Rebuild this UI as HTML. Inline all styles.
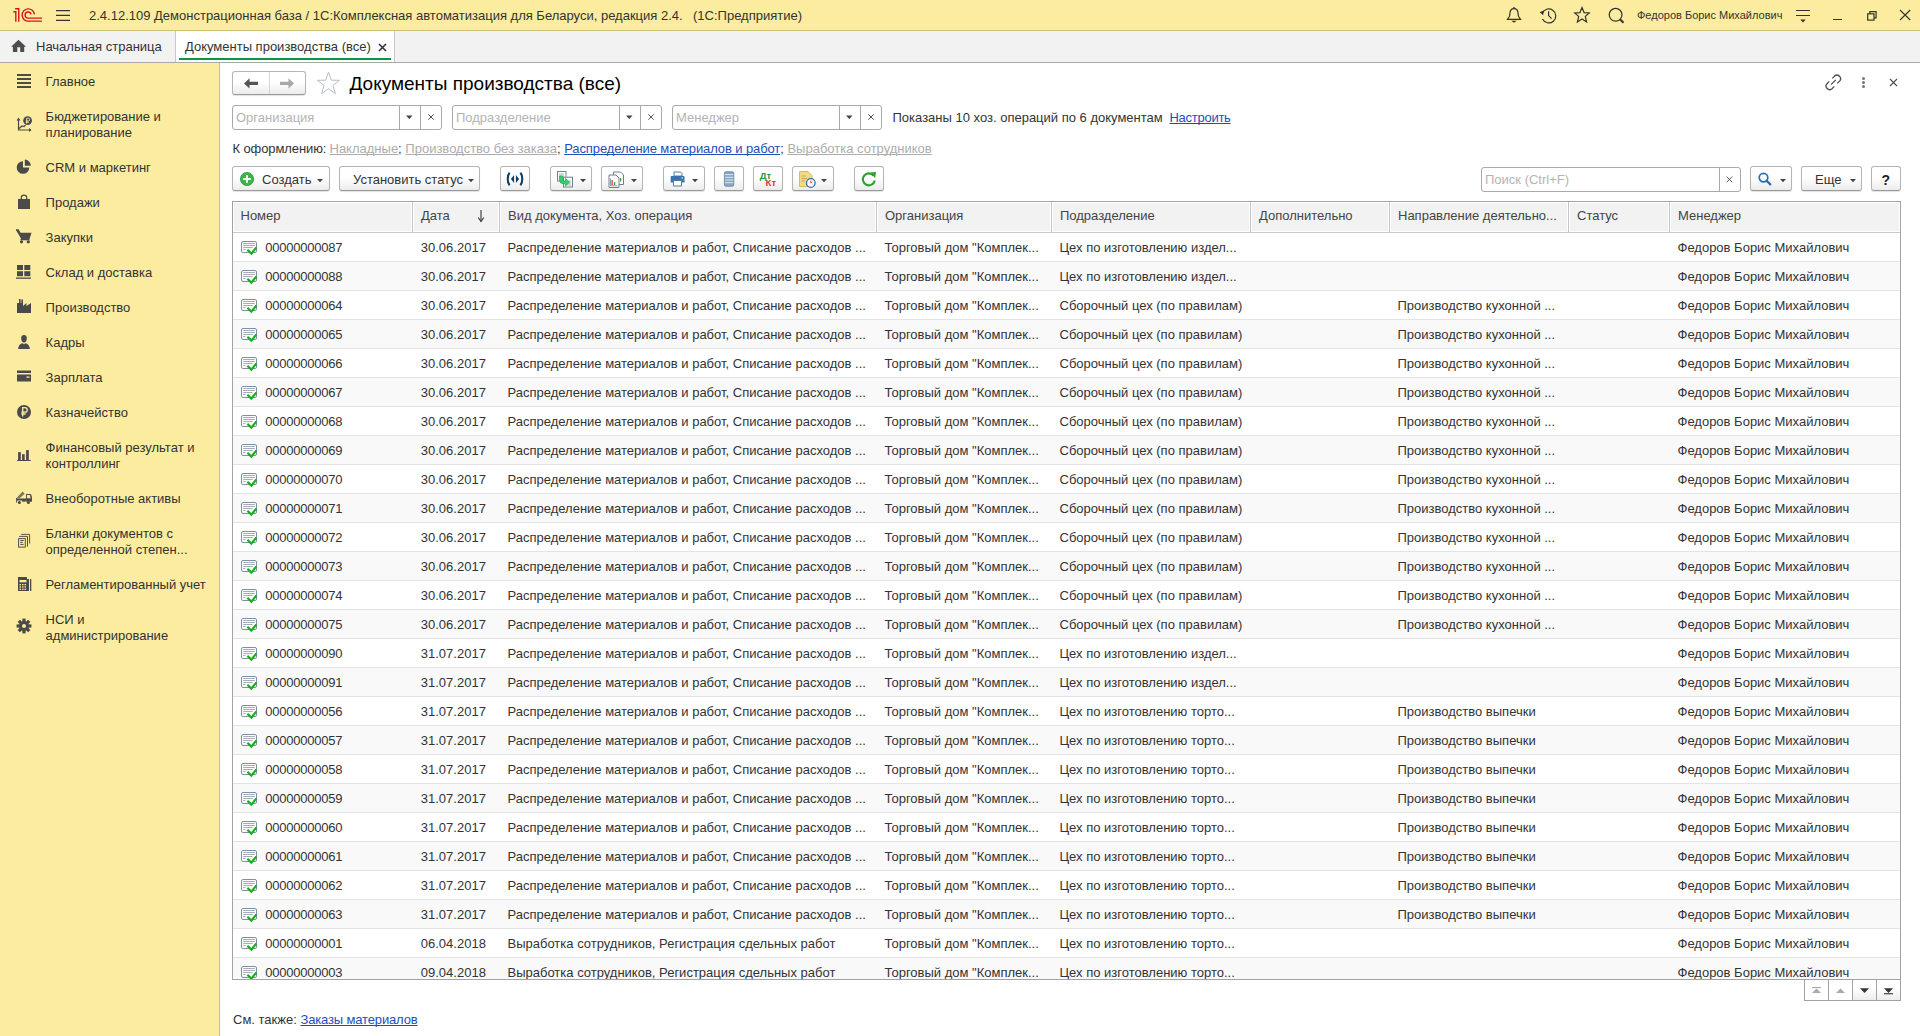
<!DOCTYPE html><html><head><meta charset="utf-8"><style>
html,body{margin:0;padding:0;width:1920px;height:1036px;overflow:hidden;background:#fff;font-family:"Liberation Sans", sans-serif;}
.t{position:absolute;white-space:pre;}
.btn{position:absolute;box-sizing:border-box;border:1px solid #b5b5b5;border-bottom-color:#9a9a9a;border-radius:3px;background:linear-gradient(#fff 0%,#fff 45%,#ececec 100%);box-shadow:0 1px 1px rgba(0,0,0,.12);}
.fld{position:absolute;box-sizing:border-box;border:1px solid #a9a9a9;border-radius:3px;background:#fff;}
.u{text-decoration:underline;}
*{text-decoration-skip-ink:none;}
</style></head><body>

<div style="position:absolute;left:0px;top:0px;width:1920px;height:30px;background:#fbec9f"></div>
<div style="position:absolute;left:0px;top:30px;width:1920px;height:1px;background:#cdbf78"></div>
<svg style="position:absolute;left:8px;top:4px" width="40" height="22" viewBox="0 0 40 22"><g fill="none" stroke="#d8131c" stroke-width="1.38"><path d="M7.8,17.7 V7.8 H5.3 M7.1,4.8 H10.8 V17.7"/><path d="M26.4,10.3 A6.15,6.15 0 1 0 20.3,17.15 H34"/><path d="M23.1,10.4 A3.05,3.05 0 1 0 20.1,14.1 H34"/></g></svg>
<svg style="position:absolute;left:56px;top:8px" width="15" height="14" viewBox="0 0 15 14"><g stroke="#333" stroke-width="1.25"><path d="M0,2.5H14M0,7.4H14M0,12.4H14"/></g></svg>
<div class="t " style="left:89px;top:9.0px;font-size:13px;line-height:13px;color:#333;">2.4.12.109 Демонстрационная база / 1С:Комплексная автоматизация для Беларуси, редакция 2.4.</div>
<div class="t " style="left:693px;top:9.0px;font-size:13px;line-height:13px;color:#333;">(1С:Предприятие)</div>
<svg style="position:absolute;left:1505px;top:6px" width="18" height="18" viewBox="0 0 18 18"><g fill="none" stroke="#333" stroke-width="1.2"><path d="M2.4,13.4 H15.6 L13.8,10.8 C13,9.4 13.2,7.5 12.8,5.5 C12.3,3.3 10.9,2.6 9,2.6 C7.1,2.6 5.7,3.3 5.2,5.5 C4.8,7.5 5,9.4 4.2,10.8 Z"/></g><circle cx="9" cy="1.9" r="0.9" fill="#333"/><path d="M6.3,14.7 H11.7 L9,16.8 Z" fill="#333"/></svg>
<svg style="position:absolute;left:1539px;top:7px" width="18" height="17" viewBox="0 0 18 17"><g fill="none" stroke="#333" stroke-width="1.2"><path d="M3.2,6.5 A7,7 0 1 1 3.5,12"/><path d="M9.6,4.2 V8.6 L12.6,11.6"/></g><path d="M0.7,5.2 L4.7,3.4 L4.2,8.2 Z" fill="#333"/></svg>
<svg style="position:absolute;left:1573px;top:6px" width="18" height="18" viewBox="0 0 18 18"><g fill="none" stroke="#333" stroke-width="1.2" stroke-linejoin="miter"><path d="M9,1.6 L11.1,6.6 L16.3,6.9 L12.3,10.4 L13.6,15.9 L9,13.0 L4.4,15.9 L5.7,10.4 L1.7,6.9 L6.9,6.6 Z"/></g></svg>
<svg style="position:absolute;left:1607px;top:6px" width="18" height="18" viewBox="0 0 18 18"><g fill="none" stroke="#333" stroke-width="1.2"><circle cx="8.6" cy="8.8" r="6.4"/></g><path d="M13,13.3 L16.5,16.8" stroke="#333" stroke-width="2"/></svg>
<div class="t " style="left:1637px;top:10.290000000000001px;font-size:11px;line-height:11px;color:#333;">Федоров Борис Михайлович</div>
<svg style="position:absolute;left:1795px;top:8px" width="16" height="16" viewBox="0 0 16 16"><g stroke="#333" stroke-width="1.2"><path d="M1,2.5H15M1,7.5H15"/></g><path d="M5.3,11.6 H10.7 L8,14.6 Z" fill="#333"/></svg>
<div style="position:absolute;left:1833px;top:19px;width:9px;height:1.3px;background:#333"></div>
<svg style="position:absolute;left:1865px;top:9px" width="13" height="13" viewBox="0 0 13 13"><g fill="none" stroke="#333" stroke-width="1.2"><rect x="2.7" y="4.8" width="6.3" height="6.3"/><path d="M4.8,4.8 V2.6 H11.1 V8.9 H9"/></g></svg>
<svg style="position:absolute;left:1898px;top:8px" width="14" height="14" viewBox="0 0 14 14"><g stroke="#333" stroke-width="1.1"><path d="M2,2 L12.2,12 M12.2,2 L2,12"/></g></svg>
<div style="position:absolute;left:0px;top:31px;width:1920px;height:31px;background:#f2f2f2"></div>
<div style="position:absolute;left:0px;top:62px;width:1920px;height:1px;background:#a9a9a9"></div>
<svg style="position:absolute;left:10px;top:38px" width="18" height="16" viewBox="0 0 18 16"><path d="M8.5,1.8 L1.1,8.8 H2.9 V14 H7.3 V9.2 H10.2 V14 H14.2 V8.8 H16 Z" fill="#4d4d4d"/></svg>
<div class="t " style="left:36px;top:40.0px;font-size:13px;line-height:13px;color:#333;">Начальная страница</div>
<div style="position:absolute;left:175px;top:31px;width:1px;height:31px;background:#c8c8c8"></div>
<div style="position:absolute;left:176px;top:31px;width:218px;height:31px;background:#fff"></div>
<div style="position:absolute;left:394px;top:31px;width:1px;height:31px;background:#c8c8c8"></div>
<div style="position:absolute;left:179px;top:58px;width:212px;height:2px;background:#0b9444"></div>
<div class="t " style="left:185px;top:40.0px;font-size:13px;line-height:13px;color:#333;">Документы производства (все)</div>
<svg style="position:absolute;left:377px;top:42px" width="11" height="11" viewBox="0 0 11 11"><g stroke="#333" stroke-width="1.6"><path d="M2,2 L9,9 M9,2 L2,9"/></g></svg>
<div style="position:absolute;left:0px;top:63px;width:219px;height:973px;background:#fbec9f"></div>
<div style="position:absolute;left:219px;top:63px;width:1px;height:973px;background:#cfc27e"></div>
<svg style="position:absolute;left:16px;top:72px" width="16" height="16" viewBox="0 0 16 16"><g fill="#4a4a4a"><rect x="1" y="2" width="14" height="2"/><rect x="1" y="6" width="14" height="2"/><rect x="1" y="10" width="14" height="2"/><rect x="1" y="14" width="14" height="2"/></g></svg>
<div class="t " style="left:45.6px;top:74.5px;font-size:13px;line-height:13px;color:#333;">Главное</div>
<svg style="position:absolute;left:16px;top:116px" width="16" height="16" viewBox="0 0 16 16"><g fill="none" stroke="#4a4a4a" stroke-width="1.2"><path d="M2.5,3 V14 H14.5"/><path d="M2.5,13 L6,10 L8,10.5 L9.5,9"/></g><path d="M0.5,4.5 L2.5,1.5 L4.5,4.5Z M13,12 L15.5,14 L13,16Z" fill="#4a4a4a"/><circle cx="11.6" cy="4.6" r="4.4" fill="#4a4a4a"/><path d="M10.7,7.6V2.2H12.3A1.4,1.4 0 0 1 12.3,5H9.8M9.8,6.3H12.8" stroke="#fbec9f" stroke-width="0.9" fill="none"/></svg>
<div class="t " style="left:45.6px;top:109.5px;font-size:13px;line-height:13px;color:#333;">Бюджетирование и</div>
<div class="t " style="left:45.6px;top:125.5px;font-size:13px;line-height:13px;color:#333;">планирование</div>
<svg style="position:absolute;left:16px;top:158px" width="16" height="16" viewBox="0 0 16 16"><path d="M7,3.2 A6.3,6.3 0 1 0 13.3,9.5 H7 Z" fill="#4a4a4a"/><path d="M8.8,1.6 A6.3,6.3 0 0 1 14.9,7.7 H8.8 Z" fill="#4a4a4a"/></svg>
<div class="t " style="left:45.6px;top:160.5px;font-size:13px;line-height:13px;color:#333;">CRM и маркетинг</div>
<svg style="position:absolute;left:16px;top:194px" width="16" height="16" viewBox="0 0 16 16"><path d="M2,5 H14 V15 H2 Z" fill="#4a4a4a"/><path d="M5.3,6 V3.8 A2.7,2.7 0 0 1 10.7,3.8 V6" fill="none" stroke="#4a4a4a" stroke-width="1.3"/></svg>
<div class="t " style="left:45.6px;top:195.5px;font-size:13px;line-height:13px;color:#333;">Продажи</div>
<svg style="position:absolute;left:16px;top:228px" width="16" height="16" viewBox="0 0 16 16"><path d="M0,2 H3 L4.5,4.8 H15.5 L13.5,11 H5.2 Z" fill="#4a4a4a"/><path d="M0,2 H3" stroke="#4a4a4a" stroke-width="1.4"/><circle cx="5.5" cy="13.8" r="1.6" fill="#4a4a4a"/><circle cx="12.3" cy="13.8" r="1.6" fill="#4a4a4a"/><rect x="4.5" y="11" width="9" height="1.3" fill="#4a4a4a"/></svg>
<div class="t " style="left:45.6px;top:230.5px;font-size:13px;line-height:13px;color:#333;">Закупки</div>
<svg style="position:absolute;left:16px;top:264px" width="16" height="16" viewBox="0 0 16 16"><g fill="#4a4a4a"><rect x="1" y="1" width="6" height="5"/><rect x="8.3" y="1" width="6" height="5"/><rect x="1" y="7.2" width="6" height="5"/><rect x="8.3" y="7.2" width="6" height="5"/><rect x="0" y="13.5" width="15" height="1.3"/></g></svg>
<div class="t " style="left:45.6px;top:265.5px;font-size:13px;line-height:13px;color:#333;">Склад и доставка</div>
<svg style="position:absolute;left:16px;top:298px" width="16" height="16" viewBox="0 0 16 16"><path d="M1,15 V5 L3,5 V1 H4.6 V5 H5.4 V1.5 H7 V8 L10.5,5 V8 L15,5 V15 Z" fill="#4a4a4a"/></svg>
<div class="t " style="left:45.6px;top:300.5px;font-size:13px;line-height:13px;color:#333;">Производство</div>
<svg style="position:absolute;left:16px;top:334px" width="16" height="16" viewBox="0 0 16 16"><path d="M8,1 C10.4,1 11,3 10.8,5 C10.6,7 9.6,8.4 8,8.4 C6.4,8.4 5.4,7 5.2,5 C5,3 5.6,1 8,1 Z M2.2,15 C2.2,11.5 4.5,9.6 6.6,9.3 L8,10.2 L9.4,9.3 C11.5,9.6 13.8,11.5 13.8,15 Z" fill="#4a4a4a"/></svg>
<div class="t " style="left:45.6px;top:335.5px;font-size:13px;line-height:13px;color:#333;">Кадры</div>
<svg style="position:absolute;left:16px;top:368px" width="16" height="16" viewBox="0 0 16 16"><path d="M1,2.5 H15 V13.5 H1 Z" fill="#4a4a4a"/><rect x="1" y="5" width="14" height="1.5" fill="#fbec9f"/><rect x="10.5" y="8.5" width="3" height="1.3" fill="#fbec9f"/></svg>
<div class="t " style="left:45.6px;top:370.5px;font-size:13px;line-height:13px;color:#333;">Зарплата</div>
<svg style="position:absolute;left:16px;top:404px" width="16" height="16" viewBox="0 0 16 16"><circle cx="8" cy="8" r="7" fill="#4a4a4a"/><path d="M6.7,12.5 V3.7 H9 A2.2,2.2 0 0 1 9,8.1 H5.4 M5.4,10 H9.6" stroke="#fbec9f" stroke-width="1.3" fill="none"/></svg>
<div class="t " style="left:45.6px;top:405.5px;font-size:13px;line-height:13px;color:#333;">Казначейство</div>
<svg style="position:absolute;left:16px;top:446px" width="16" height="16" viewBox="0 0 16 16"><g fill="#4a4a4a"><rect x="2.1" y="6.1" width="2.7" height="8"/><rect x="6.1" y="8.2" width="2.6" height="6"/><rect x="10.1" y="4.1" width="2.7" height="10"/><rect x="1" y="14" width="13.9" height="1" rx="0.5"/></g></svg>
<div class="t " style="left:45.6px;top:440.5px;font-size:13px;line-height:13px;color:#333;">Финансовый результат и</div>
<div class="t " style="left:45.6px;top:456.5px;font-size:13px;line-height:13px;color:#333;">контроллинг</div>
<svg style="position:absolute;left:16px;top:490px" width="16" height="16" viewBox="0 0 16 16"><g fill="#4a4a4a"><path d="M10.1,4 H14.8 L15.9,6.5 V11.7 H10.1 Z M11,5 V8.4 H14.6 L14,5 Z" fill-rule="evenodd"/><rect x="0.2" y="8.5" width="15.7" height="2"/><rect x="6.2" y="9.9" width="3.5" height="1.8"/><rect x="0.2" y="8" width="0.9" height="4.7"/><circle cx="3.4" cy="12.4" r="1.5"/><circle cx="12.4" cy="12.4" r="1.5"/></g><path d="M0.4,8.3 L6.6,1.6 L8.7,3.7 L3.4,8.6 Z" fill="#7a7662"/></svg>
<div class="t " style="left:45.6px;top:491.5px;font-size:13px;line-height:13px;color:#333;">Внеоборотные активы</div>
<svg style="position:absolute;left:16px;top:532px" width="16" height="16" viewBox="0 0 16 16"><g fill="none" stroke="#4a4a4a" stroke-width="0.95"><rect x="2.6" y="6.6" width="6.7" height="8.5"/><path d="M3.2,4.4 H11.5 V14.6 M5.3,2.4 H13.6 V11.5"/><path d="M4.2,8.5 H7.7 M4.2,10.4 H6.8 M4.2,12.4 H7.7"/></g></svg>
<div class="t " style="left:45.6px;top:526.5px;font-size:13px;line-height:13px;color:#333;">Бланки документов с</div>
<div class="t " style="left:45.6px;top:542.5px;font-size:13px;line-height:13px;color:#333;">определенной степен...</div>
<svg style="position:absolute;left:16px;top:576px" width="16" height="16" viewBox="0 0 16 16"><path d="M2,1 H11 V3 H13 V15 H2 Z" fill="#4a4a4a"/><g fill="#fbec9f"><rect x="3.5" y="4" width="7" height="2.3"/><rect x="3.5" y="8" width="1.5" height="1.3"/><rect x="6" y="8" width="1.5" height="1.3"/><rect x="8.5" y="8" width="1.5" height="1.3"/><rect x="3.5" y="10.3" width="1.5" height="1.3"/><rect x="6" y="10.3" width="1.5" height="1.3"/><rect x="8.5" y="10.3" width="1.5" height="1.3"/><rect x="3.5" y="12.6" width="1.5" height="1.3"/><rect x="6" y="12.6" width="1.5" height="1.3"/><rect x="8.5" y="12.6" width="1.5" height="1.3"/></g><rect x="14" y="3" width="1.3" height="12" fill="#4a4a4a"/></svg>
<div class="t " style="left:45.6px;top:577.5px;font-size:13px;line-height:13px;color:#333;">Регламентированный учет</div>
<svg style="position:absolute;left:16px;top:618px" width="16" height="16" viewBox="0 0 16 16"><g transform="translate(8,8)" fill="#4a4a4a"><circle r="5"/><rect x="-1.6" y="-7.4" width="3.2" height="3.4" transform="rotate(0)"/><rect x="-1.6" y="-7.4" width="3.2" height="3.4" transform="rotate(45)"/><rect x="-1.6" y="-7.4" width="3.2" height="3.4" transform="rotate(90)"/><rect x="-1.6" y="-7.4" width="3.2" height="3.4" transform="rotate(135)"/><rect x="-1.6" y="-7.4" width="3.2" height="3.4" transform="rotate(180)"/><rect x="-1.6" y="-7.4" width="3.2" height="3.4" transform="rotate(225)"/><rect x="-1.6" y="-7.4" width="3.2" height="3.4" transform="rotate(270)"/><rect x="-1.6" y="-7.4" width="3.2" height="3.4" transform="rotate(315)"/><circle r="2" fill="#fbec9f"/></g></svg>
<div class="t " style="left:45.6px;top:612.5px;font-size:13px;line-height:13px;color:#333;">НСИ и</div>
<div class="t " style="left:45.6px;top:628.5px;font-size:13px;line-height:13px;color:#333;">администрирование</div>
<div class="btn" style="left:232px;top:71px;width:74px;height:24px;"></div>
<div style="position:absolute;left:269px;top:72px;width:1px;height:22px;background:#d5d5d5"></div>
<svg style="position:absolute;left:243px;top:76px" width="18" height="15" viewBox="0 0 18 15"><path d="M1,7.4 L6.5,2.2 V5.7 H15 V9.1 H6.5 V12.6 Z" fill="#555"/></svg>
<svg style="position:absolute;left:279px;top:76px" width="18" height="15" viewBox="0 0 18 15"><path d="M15,7.4 L9.5,2.2 V5.7 H1 V9.1 H9.5 V12.6 Z" fill="#a8a8a8"/></svg>
<svg style="position:absolute;left:316px;top:71px" width="25" height="24" viewBox="0 0 25 24"><path d="M12.5,1.2 L15.3,9.2 L23.6,9.3 L17,14.4 L19.4,22.6 L12.5,17.7 L5.6,22.6 L8,14.4 L1.4,9.3 L9.7,9.2 Z" fill="none" stroke="#b9bec4" stroke-width="1"/></svg>
<div class="t " style="left:349.5px;top:73.92px;font-size:19px;line-height:19px;color:#000;">Документы производства (все)</div>
<svg style="position:absolute;left:1824px;top:73px" width="20" height="18" viewBox="0 0 20 18"><g fill="none" stroke="#4d4d4d" stroke-width="1.3"><path d="M5.3,8.4 L3,10.7 A3.54,3.54 0 0 0 8,15.7 L10.3,13.4"/><path d="M8.3,5.4 L10.6,3.1 A3.54,3.54 0 0 1 15.6,8.1 L13.3,10.4"/><path d="M7,11.6 L11.8,6.9"/></g></svg>
<div style="position:absolute;left:1861.9px;top:76.80000000000001px;width:3.2px;height:3.2px;border-radius:50%;background:#777"></div>
<div style="position:absolute;left:1861.9px;top:80.80000000000001px;width:3.2px;height:3.2px;border-radius:50%;background:#777"></div>
<div style="position:absolute;left:1861.9px;top:84.80000000000001px;width:3.2px;height:3.2px;border-radius:50%;background:#777"></div>
<svg style="position:absolute;left:1888px;top:77px" width="11" height="11" viewBox="0 0 11 11"><g stroke="#4d4d4d" stroke-width="1.1"><path d="M2,2 L9,9 M9,2 L2,9"/></g></svg>
<div class="fld" style="left:232px;top:105px;width:210px;height:25px;"></div>
<div style="position:absolute;left:399px;top:106px;width:1px;height:23px;background:#a9a9a9"></div>
<div style="position:absolute;left:420px;top:106px;width:1px;height:23px;background:#a9a9a9"></div>
<svg style="position:absolute;left:404px;top:114px" width="11" height="6" viewBox="0 0 11 6"><path d="M2,1.5 H8.5 L5.25,5 Z" fill="#444"/></svg>
<svg style="position:absolute;left:426px;top:112px" width="10" height="10" viewBox="0 0 10 10"><g stroke="#555" stroke-width="1"><path d="M2.3,2.3 L7.7,7.7 M7.7,2.3 L2.3,7.7"/></g></svg>
<div class="t " style="left:236px;top:111.0px;font-size:13px;line-height:13px;color:#b4b4b4;">Организация</div>
<div class="fld" style="left:452px;top:105px;width:210px;height:25px;"></div>
<div style="position:absolute;left:619px;top:106px;width:1px;height:23px;background:#a9a9a9"></div>
<div style="position:absolute;left:640px;top:106px;width:1px;height:23px;background:#a9a9a9"></div>
<svg style="position:absolute;left:624px;top:114px" width="11" height="6" viewBox="0 0 11 6"><path d="M2,1.5 H8.5 L5.25,5 Z" fill="#444"/></svg>
<svg style="position:absolute;left:646px;top:112px" width="10" height="10" viewBox="0 0 10 10"><g stroke="#555" stroke-width="1"><path d="M2.3,2.3 L7.7,7.7 M7.7,2.3 L2.3,7.7"/></g></svg>
<div class="t " style="left:456px;top:111.0px;font-size:13px;line-height:13px;color:#b4b4b4;">Подразделение</div>
<div class="fld" style="left:672px;top:105px;width:210px;height:25px;"></div>
<div style="position:absolute;left:839px;top:106px;width:1px;height:23px;background:#a9a9a9"></div>
<div style="position:absolute;left:860px;top:106px;width:1px;height:23px;background:#a9a9a9"></div>
<svg style="position:absolute;left:844px;top:114px" width="11" height="6" viewBox="0 0 11 6"><path d="M2,1.5 H8.5 L5.25,5 Z" fill="#444"/></svg>
<svg style="position:absolute;left:866px;top:112px" width="10" height="10" viewBox="0 0 10 10"><g stroke="#555" stroke-width="1"><path d="M2.3,2.3 L7.7,7.7 M7.7,2.3 L2.3,7.7"/></g></svg>
<div class="t " style="left:676px;top:111.0px;font-size:13px;line-height:13px;color:#b4b4b4;">Менеджер</div>
<div class="t " style="left:892.5px;top:111.0px;font-size:13px;line-height:13px;color:#333;">Показаны 10 хоз. операций по 6 документам</div>
<div class="t " style="left:1169.5px;top:111.0px;font-size:13px;line-height:13px;color:#1d4fb8;text-decoration:underline;letter-spacing:-0.27px;">Настроить</div>
<div class="t " style="left:232.5px;top:141.7px;font-size:13px;line-height:13px;color:#333;letter-spacing:-0.1px;">К оформлению:</div>
<div class="t" style="left:329.5px;top:141.7px;font-size:13px;line-height:13px;"><span style="color:#adadad;text-decoration:underline;text-decoration-skip-ink:none;">Накладные</span><span style="color:#333;">; </span><span style="color:#adadad;text-decoration:underline;text-decoration-skip-ink:none;">Производство без заказа</span><span style="color:#333;">; </span><span style="color:#1d4fb8;letter-spacing:-0.11px;text-decoration:underline;text-decoration-skip-ink:none;">Распределение материалов и работ</span><span style="color:#333;">; </span><span style="color:#adadad;text-decoration:underline;text-decoration-skip-ink:none;">Выработка сотрудников</span></div>
<div class="btn" style="left:232px;top:166px;width:98px;height:25px;"></div>
<svg style="position:absolute;left:239px;top:171px" width="16" height="16" viewBox="0 0 16 16"><circle cx="8" cy="8" r="6.6" fill="#3bb54a" stroke="#2e9a3c" stroke-width="0.8"/><path d="M8,4.2 V11.8 M4.2,8 H11.8" stroke="#fff" stroke-width="2"/></svg>
<div class="t " style="left:262px;top:173.0px;font-size:13px;line-height:13px;color:#333;">Создать</div>
<svg style="position:absolute;left:315.5px;top:177.6px" width="8" height="5" viewBox="0 0 8 5"><path d="M1,1 H7 L4,4.2 Z" fill="#444"/></svg>
<div class="btn" style="left:339px;top:166px;width:141px;height:25px;"></div>
<div class="t " style="left:353px;top:173.0px;font-size:13px;line-height:13px;color:#333;">Установить статус</div>
<svg style="position:absolute;left:466.5px;top:177.6px" width="8" height="5" viewBox="0 0 8 5"><path d="M1,1 H7 L4,4.2 Z" fill="#444"/></svg>
<div class="btn" style="left:500px;top:166px;width:30px;height:25px;"></div>
<svg style="position:absolute;left:505px;top:172px" width="20" height="14" viewBox="0 0 20 14"><g fill="none" stroke="#0d3f66" stroke-width="2.1"><path d="M4.6,0.8 C2.1,3.5 2.1,10.5 4.6,13.2"/><path d="M15.4,0.8 C17.9,3.5 17.9,10.5 15.4,13.2"/></g><path d="M9.1,3 L5.9,7 L9.1,11 Z M10.9,3 L14.1,7 L10.9,11 Z" fill="#0d3f66"/></svg>
<div class="btn" style="left:550px;top:166px;width:42px;height:25px;"></div>
<svg style="position:absolute;left:556px;top:170px" width="18" height="18" viewBox="0 0 18 18"><rect x="1.5" y="1.5" width="8.5" height="9.5" fill="#fff" stroke="#6e8193" stroke-width="1"/><path d="M3,4 H8 M3,6 H8" stroke="#8c9cab" stroke-width="0.8"/><rect x="7.5" y="7.2" width="9" height="9.8" fill="#fff" stroke="#6e8193" stroke-width="1"/><path d="M11,11 H15 M11,13 H15 M11,15 H15" stroke="#8c9cab" stroke-width="0.8"/><path d="M3.5,6 H6.5 V9.5 A1.5,1.5 0 0 0 8,11 H9.5 V8.5 L13.5,12.2 L9.5,16 V13.8 H7.5 A4,4 0 0 1 3.5,9.8 Z" fill="#31d06a" stroke="#1da84c" stroke-width="0.7"/></svg>
<svg style="position:absolute;left:578.5px;top:177.6px" width="8" height="5" viewBox="0 0 8 5"><path d="M1,1 H7 L4,4.2 Z" fill="#444"/></svg>
<div class="btn" style="left:601px;top:166px;width:42px;height:25px;"></div>
<svg style="position:absolute;left:607px;top:170px" width="18" height="18" viewBox="0 0 18 18"><path d="M6.5,2 H13.5 L16.5,5 V14.5 H6.5 Z" fill="#fff" stroke="#6e8193" stroke-width="1"/><path d="M2,5 H9 L12,8 V17.5 H2 Z" fill="#fff" stroke="#6e8193" stroke-width="1"/><rect x="4.5" y="10" width="1.3" height="5" fill="#e53935"/><rect x="7" y="12" width="1.3" height="3" fill="#43a047"/><path d="M3.5,8.5 V15.8 H10.5" stroke="#6e8193" stroke-width="0.8" fill="none"/><rect x="13" y="8" width="1.2" height="3.5" fill="#43a047"/></svg>
<svg style="position:absolute;left:629.5px;top:177.6px" width="8" height="5" viewBox="0 0 8 5"><path d="M1,1 H7 L4,4.2 Z" fill="#444"/></svg>
<div class="btn" style="left:663px;top:166px;width:42px;height:25px;"></div>
<svg style="position:absolute;left:670px;top:171px" width="16" height="16" viewBox="0 0 16 16"><path d="M4,1 H10.5 L12,2.5 V5 H4 Z" fill="#fff" stroke="#3c6ea0" stroke-width="0.9"/><path d="M1.5,5 H13.5 A1,1 0 0 1 14.5,6 V11.5 H12 V9.5 H3 V11.5 H0.7 V6 A1,1 0 0 1 1.5,5 Z" fill="#3b73ad"/><path d="M3.5,9.5 H11.5 V15 H3.5 Z" fill="#fff" stroke="#3c6ea0" stroke-width="0.9"/><rect x="11.5" y="6.5" width="1.5" height="1" fill="#fff"/></svg>
<svg style="position:absolute;left:690.5px;top:177.6px" width="8" height="5" viewBox="0 0 8 5"><path d="M1,1 H7 L4,4.2 Z" fill="#444"/></svg>
<div class="btn" style="left:714px;top:166px;width:30px;height:25px;"></div>
<svg style="position:absolute;left:723px;top:171px" width="12" height="16" viewBox="0 0 12 16"><rect x="1.4" y="0.8" width="9.4" height="14.4" rx="1.4" fill="#8aa7c4" stroke="#6a88a6" stroke-width="0.9"/><path d="M1.8,3.6 H10.4 M1.8,6.3 H10.4 M1.8,9 H10.4 M1.8,11.7 H10.4" stroke="#e8eef4" stroke-width="0.9"/></svg>
<div class="btn" style="left:753px;top:166px;width:30px;height:25px;"></div>
<div class="t " style="left:759.8px;top:170.56px;font-size:9.5px;line-height:9.5px;color:#169b3a;font-weight:bold;">Дт</div>
<div class="t " style="left:765.6px;top:178.16px;font-size:9.5px;line-height:9.5px;color:#d9363e;font-weight:bold;">Кт</div>
<div class="btn" style="left:792px;top:166px;width:42px;height:25px;"></div>
<svg style="position:absolute;left:798px;top:170px" width="19" height="18" viewBox="0 0 19 18"><path d="M1.5,1.5 H10 L14,5.5 V16.5 H1.5 Z" fill="#f2dc83" stroke="#cfb55a" stroke-width="0.9"/><path d="M3.5,6 H8 M3.5,8.5 H9 M3.5,11 H7" stroke="#b89c4a" stroke-width="0.8"/><circle cx="12.8" cy="13" r="4.3" fill="#fff" stroke="#2f6fb5" stroke-width="1.3"/><path d="M12.8,10.5 V13 L14.3,11.8" stroke="#e53935" stroke-width="0.9" fill="none"/></svg>
<svg style="position:absolute;left:819.5px;top:177.6px" width="8" height="5" viewBox="0 0 8 5"><path d="M1,1 H7 L4,4.2 Z" fill="#444"/></svg>
<div class="btn" style="left:854px;top:166px;width:30px;height:25px;"></div>
<svg style="position:absolute;left:861px;top:171px" width="16" height="16" viewBox="0 0 16 16"><path d="M12.6,4.6 A6,6 0 1 0 13.8,9.5" fill="none" stroke="#2ca02c" stroke-width="2.1"/><path d="M9.2,1.5 L15,1 L14.2,7.2 Z" fill="#2ca02c"/></svg>
<div class="fld" style="left:1481px;top:167px;width:260px;height:25px;"></div>
<div style="position:absolute;left:1719px;top:168px;width:1px;height:23px;background:#a9a9a9"></div>
<div class="t " style="left:1485px;top:173.0px;font-size:13px;line-height:13px;color:#b4b4b4;">Поиск (Ctrl+F)</div>
<svg style="position:absolute;left:1724px;top:174px" width="11" height="11" viewBox="0 0 11 11"><g stroke="#555" stroke-width="1"><path d="M2.6,2.6 L8.2,8.2 M8.2,2.6 L2.6,8.2"/></g></svg>
<div class="btn" style="left:1750px;top:166px;width:42px;height:25px;"></div>
<svg style="position:absolute;left:1757px;top:171px" width="16" height="16" viewBox="0 0 16 16"><circle cx="6.5" cy="6.6" r="4.3" fill="none" stroke="#2b6cb0" stroke-width="1.7"/><path d="M9.6,9.7 L13.3,13.4" stroke="#2b6cb0" stroke-width="2.2" stroke-linecap="round"/></svg>
<svg style="position:absolute;left:1778.5px;top:177.6px" width="8" height="5" viewBox="0 0 8 5"><path d="M1,1 H7 L4,4.2 Z" fill="#444"/></svg>
<div class="btn" style="left:1801px;top:166px;width:61px;height:25px;"></div>
<div class="t " style="left:1815px;top:173.0px;font-size:13px;line-height:13px;color:#333;">Еще</div>
<svg style="position:absolute;left:1848.5px;top:177.6px" width="8" height="5" viewBox="0 0 8 5"><path d="M1,1 H7 L4,4.2 Z" fill="#444"/></svg>
<div class="btn" style="left:1871px;top:166px;width:30px;height:25px;"></div>
<div class="t " style="left:1881.5px;top:173.15px;font-size:14px;line-height:14px;color:#222;font-weight:bold;">?</div>
<div style="position:absolute;left:232px;top:201px;width:1669px;height:779px;box-sizing:border-box;border:1px solid #a3a3a3;background:#fff"></div>
<div style="position:absolute;left:233px;top:202px;width:1667px;height:30px;background:#fff"></div>
<div style="position:absolute;left:233px;top:232px;width:1667px;height:1px;background:#c9c9c9"></div>
<div style="position:absolute;left:234px;top:203px;width:177px;height:28px;background:#f2f2f2"></div>
<div style="position:absolute;left:414px;top:203px;width:84px;height:28px;background:#f2f2f2"></div>
<div style="position:absolute;left:501px;top:203px;width:374px;height:28px;background:#f2f2f2"></div>
<div style="position:absolute;left:878px;top:203px;width:172px;height:28px;background:#f2f2f2"></div>
<div style="position:absolute;left:1053px;top:203px;width:196px;height:28px;background:#f2f2f2"></div>
<div style="position:absolute;left:1252px;top:203px;width:136px;height:28px;background:#f2f2f2"></div>
<div style="position:absolute;left:1391px;top:203px;width:176px;height:28px;background:#f2f2f2"></div>
<div style="position:absolute;left:1570px;top:203px;width:98px;height:28px;background:#f2f2f2"></div>
<div style="position:absolute;left:1671px;top:203px;width:228px;height:28px;background:#f2f2f2"></div>
<div style="position:absolute;left:412px;top:202px;width:1px;height:30px;background:#c6c6c6"></div>
<div style="position:absolute;left:499px;top:202px;width:1px;height:30px;background:#c6c6c6"></div>
<div style="position:absolute;left:876px;top:202px;width:1px;height:30px;background:#c6c6c6"></div>
<div style="position:absolute;left:1051px;top:202px;width:1px;height:30px;background:#c6c6c6"></div>
<div style="position:absolute;left:1250px;top:202px;width:1px;height:30px;background:#c6c6c6"></div>
<div style="position:absolute;left:1389px;top:202px;width:1px;height:30px;background:#c6c6c6"></div>
<div style="position:absolute;left:1568px;top:202px;width:1px;height:30px;background:#c6c6c6"></div>
<div style="position:absolute;left:1669px;top:202px;width:1px;height:30px;background:#c6c6c6"></div>
<div class="t " style="left:240.5px;top:209.4px;font-size:13px;line-height:13px;color:#444;">Номер</div>
<div class="t " style="left:421px;top:209.4px;font-size:13px;line-height:13px;color:#444;">Дата</div>
<div class="t " style="left:508px;top:209.4px;font-size:13px;line-height:13px;color:#444;">Вид документа, Хоз. операция</div>
<div class="t " style="left:885px;top:209.4px;font-size:13px;line-height:13px;color:#444;">Организация</div>
<div class="t " style="left:1060px;top:209.4px;font-size:13px;line-height:13px;color:#444;">Подразделение</div>
<div class="t " style="left:1259px;top:209.4px;font-size:13px;line-height:13px;color:#444;">Дополнительно</div>
<div class="t " style="left:1398px;top:209.4px;font-size:13px;line-height:13px;color:#444;">Направление деятельно...</div>
<div class="t " style="left:1577px;top:209.4px;font-size:13px;line-height:13px;color:#444;">Статус</div>
<div class="t " style="left:1678px;top:209.4px;font-size:13px;line-height:13px;color:#444;">Менеджер</div>
<svg style="position:absolute;left:476px;top:209px" width="10" height="14" viewBox="0 0 10 14"><path d="M5,1 V11.5" stroke="#333" stroke-width="1.1"/><path d="M2.2,8.5 L5,12.5 L7.8,8.5" fill="none" stroke="#333" stroke-width="1.1"/></svg>
<div style="position:absolute;left:233px;top:233px;width:1667px;height:746px;overflow:hidden">
<div style="position:absolute;left:0;top:0px;width:1667px;height:28px;background:#fff"></div>
<div style="position:absolute;left:0;top:28px;width:1667px;height:1px;background:#e3e3e3"></div>
<svg style="position:absolute;left:8px;top:8px" width="17" height="16" viewBox="0 0 17 16"><rect x="0.5" y="0.5" width="15" height="11" rx="1.5" fill="#fff" stroke="#7d90a4" stroke-width="1"/><path d="M2.2,2.5 H13.8 M2.2,4.5 H13.8 M2.2,6.5 H11.6 M2.2,8.5 H4.5" stroke="#9aa5b1" stroke-width="0.9"/><path d="M6.4,8.7 L10.3,12.6 L15.4,6.5" fill="none" stroke="#14b11c" stroke-width="2.2"/></svg>
<div class="t" style="left:32.19999999999999px;top:8.0px;font-size:13px;line-height:13px;color:#333;letter-spacing:-0.22px;">00000000087</div>
<div class="t" style="left:187.8px;top:8.0px;font-size:13px;line-height:13px;color:#333;">30.06.2017</div>
<div class="t" style="left:274.5px;top:8.0px;font-size:13px;line-height:13px;color:#333;">Распределение материалов и работ, Списание расходов ...</div>
<div class="t" style="left:651.5px;top:8.0px;font-size:13px;line-height:13px;color:#333;">Торговый дом &quot;Комплек...</div>
<div class="t" style="left:826.5px;top:8.0px;font-size:13px;line-height:13px;color:#333;">Цех по изготовлению издел...</div>
<div class="t" style="left:1444.5px;top:8.0px;font-size:13px;line-height:13px;color:#333;">Федоров Борис Михайлович</div>
<div style="position:absolute;left:0;top:29px;width:1667px;height:28px;background:#f9f9f9"></div>
<div style="position:absolute;left:0;top:57px;width:1667px;height:1px;background:#e3e3e3"></div>
<svg style="position:absolute;left:8px;top:37px" width="17" height="16" viewBox="0 0 17 16"><rect x="0.5" y="0.5" width="15" height="11" rx="1.5" fill="#fff" stroke="#7d90a4" stroke-width="1"/><path d="M2.2,2.5 H13.8 M2.2,4.5 H13.8 M2.2,6.5 H11.6 M2.2,8.5 H4.5" stroke="#9aa5b1" stroke-width="0.9"/><path d="M6.4,8.7 L10.3,12.6 L15.4,6.5" fill="none" stroke="#14b11c" stroke-width="2.2"/></svg>
<div class="t" style="left:32.19999999999999px;top:37.0px;font-size:13px;line-height:13px;color:#333;letter-spacing:-0.22px;">00000000088</div>
<div class="t" style="left:187.8px;top:37.0px;font-size:13px;line-height:13px;color:#333;">30.06.2017</div>
<div class="t" style="left:274.5px;top:37.0px;font-size:13px;line-height:13px;color:#333;">Распределение материалов и работ, Списание расходов ...</div>
<div class="t" style="left:651.5px;top:37.0px;font-size:13px;line-height:13px;color:#333;">Торговый дом &quot;Комплек...</div>
<div class="t" style="left:826.5px;top:37.0px;font-size:13px;line-height:13px;color:#333;">Цех по изготовлению издел...</div>
<div class="t" style="left:1444.5px;top:37.0px;font-size:13px;line-height:13px;color:#333;">Федоров Борис Михайлович</div>
<div style="position:absolute;left:0;top:58px;width:1667px;height:28px;background:#fff"></div>
<div style="position:absolute;left:0;top:86px;width:1667px;height:1px;background:#e3e3e3"></div>
<svg style="position:absolute;left:8px;top:66px" width="17" height="16" viewBox="0 0 17 16"><rect x="0.5" y="0.5" width="15" height="11" rx="1.5" fill="#fff" stroke="#7d90a4" stroke-width="1"/><path d="M2.2,2.5 H13.8 M2.2,4.5 H13.8 M2.2,6.5 H11.6 M2.2,8.5 H4.5" stroke="#9aa5b1" stroke-width="0.9"/><path d="M6.4,8.7 L10.3,12.6 L15.4,6.5" fill="none" stroke="#14b11c" stroke-width="2.2"/></svg>
<div class="t" style="left:32.19999999999999px;top:66.0px;font-size:13px;line-height:13px;color:#333;letter-spacing:-0.22px;">00000000064</div>
<div class="t" style="left:187.8px;top:66.0px;font-size:13px;line-height:13px;color:#333;">30.06.2017</div>
<div class="t" style="left:274.5px;top:66.0px;font-size:13px;line-height:13px;color:#333;">Распределение материалов и работ, Списание расходов ...</div>
<div class="t" style="left:651.5px;top:66.0px;font-size:13px;line-height:13px;color:#333;">Торговый дом &quot;Комплек...</div>
<div class="t" style="left:826.5px;top:66.0px;font-size:13px;line-height:13px;color:#333;">Сборочный цех (по правилам)</div>
<div class="t" style="left:1164.5px;top:66.0px;font-size:13px;line-height:13px;color:#333;">Производство кухонной ...</div>
<div class="t" style="left:1444.5px;top:66.0px;font-size:13px;line-height:13px;color:#333;">Федоров Борис Михайлович</div>
<div style="position:absolute;left:0;top:87px;width:1667px;height:28px;background:#f9f9f9"></div>
<div style="position:absolute;left:0;top:115px;width:1667px;height:1px;background:#e3e3e3"></div>
<svg style="position:absolute;left:8px;top:95px" width="17" height="16" viewBox="0 0 17 16"><rect x="0.5" y="0.5" width="15" height="11" rx="1.5" fill="#fff" stroke="#7d90a4" stroke-width="1"/><path d="M2.2,2.5 H13.8 M2.2,4.5 H13.8 M2.2,6.5 H11.6 M2.2,8.5 H4.5" stroke="#9aa5b1" stroke-width="0.9"/><path d="M6.4,8.7 L10.3,12.6 L15.4,6.5" fill="none" stroke="#14b11c" stroke-width="2.2"/></svg>
<div class="t" style="left:32.19999999999999px;top:95.0px;font-size:13px;line-height:13px;color:#333;letter-spacing:-0.22px;">00000000065</div>
<div class="t" style="left:187.8px;top:95.0px;font-size:13px;line-height:13px;color:#333;">30.06.2017</div>
<div class="t" style="left:274.5px;top:95.0px;font-size:13px;line-height:13px;color:#333;">Распределение материалов и работ, Списание расходов ...</div>
<div class="t" style="left:651.5px;top:95.0px;font-size:13px;line-height:13px;color:#333;">Торговый дом &quot;Комплек...</div>
<div class="t" style="left:826.5px;top:95.0px;font-size:13px;line-height:13px;color:#333;">Сборочный цех (по правилам)</div>
<div class="t" style="left:1164.5px;top:95.0px;font-size:13px;line-height:13px;color:#333;">Производство кухонной ...</div>
<div class="t" style="left:1444.5px;top:95.0px;font-size:13px;line-height:13px;color:#333;">Федоров Борис Михайлович</div>
<div style="position:absolute;left:0;top:116px;width:1667px;height:28px;background:#fff"></div>
<div style="position:absolute;left:0;top:144px;width:1667px;height:1px;background:#e3e3e3"></div>
<svg style="position:absolute;left:8px;top:124px" width="17" height="16" viewBox="0 0 17 16"><rect x="0.5" y="0.5" width="15" height="11" rx="1.5" fill="#fff" stroke="#7d90a4" stroke-width="1"/><path d="M2.2,2.5 H13.8 M2.2,4.5 H13.8 M2.2,6.5 H11.6 M2.2,8.5 H4.5" stroke="#9aa5b1" stroke-width="0.9"/><path d="M6.4,8.7 L10.3,12.6 L15.4,6.5" fill="none" stroke="#14b11c" stroke-width="2.2"/></svg>
<div class="t" style="left:32.19999999999999px;top:124.0px;font-size:13px;line-height:13px;color:#333;letter-spacing:-0.22px;">00000000066</div>
<div class="t" style="left:187.8px;top:124.0px;font-size:13px;line-height:13px;color:#333;">30.06.2017</div>
<div class="t" style="left:274.5px;top:124.0px;font-size:13px;line-height:13px;color:#333;">Распределение материалов и работ, Списание расходов ...</div>
<div class="t" style="left:651.5px;top:124.0px;font-size:13px;line-height:13px;color:#333;">Торговый дом &quot;Комплек...</div>
<div class="t" style="left:826.5px;top:124.0px;font-size:13px;line-height:13px;color:#333;">Сборочный цех (по правилам)</div>
<div class="t" style="left:1164.5px;top:124.0px;font-size:13px;line-height:13px;color:#333;">Производство кухонной ...</div>
<div class="t" style="left:1444.5px;top:124.0px;font-size:13px;line-height:13px;color:#333;">Федоров Борис Михайлович</div>
<div style="position:absolute;left:0;top:145px;width:1667px;height:28px;background:#f9f9f9"></div>
<div style="position:absolute;left:0;top:173px;width:1667px;height:1px;background:#e3e3e3"></div>
<svg style="position:absolute;left:8px;top:153px" width="17" height="16" viewBox="0 0 17 16"><rect x="0.5" y="0.5" width="15" height="11" rx="1.5" fill="#fff" stroke="#7d90a4" stroke-width="1"/><path d="M2.2,2.5 H13.8 M2.2,4.5 H13.8 M2.2,6.5 H11.6 M2.2,8.5 H4.5" stroke="#9aa5b1" stroke-width="0.9"/><path d="M6.4,8.7 L10.3,12.6 L15.4,6.5" fill="none" stroke="#14b11c" stroke-width="2.2"/></svg>
<div class="t" style="left:32.19999999999999px;top:153.0px;font-size:13px;line-height:13px;color:#333;letter-spacing:-0.22px;">00000000067</div>
<div class="t" style="left:187.8px;top:153.0px;font-size:13px;line-height:13px;color:#333;">30.06.2017</div>
<div class="t" style="left:274.5px;top:153.0px;font-size:13px;line-height:13px;color:#333;">Распределение материалов и работ, Списание расходов ...</div>
<div class="t" style="left:651.5px;top:153.0px;font-size:13px;line-height:13px;color:#333;">Торговый дом &quot;Комплек...</div>
<div class="t" style="left:826.5px;top:153.0px;font-size:13px;line-height:13px;color:#333;">Сборочный цех (по правилам)</div>
<div class="t" style="left:1164.5px;top:153.0px;font-size:13px;line-height:13px;color:#333;">Производство кухонной ...</div>
<div class="t" style="left:1444.5px;top:153.0px;font-size:13px;line-height:13px;color:#333;">Федоров Борис Михайлович</div>
<div style="position:absolute;left:0;top:174px;width:1667px;height:28px;background:#fff"></div>
<div style="position:absolute;left:0;top:202px;width:1667px;height:1px;background:#e3e3e3"></div>
<svg style="position:absolute;left:8px;top:182px" width="17" height="16" viewBox="0 0 17 16"><rect x="0.5" y="0.5" width="15" height="11" rx="1.5" fill="#fff" stroke="#7d90a4" stroke-width="1"/><path d="M2.2,2.5 H13.8 M2.2,4.5 H13.8 M2.2,6.5 H11.6 M2.2,8.5 H4.5" stroke="#9aa5b1" stroke-width="0.9"/><path d="M6.4,8.7 L10.3,12.6 L15.4,6.5" fill="none" stroke="#14b11c" stroke-width="2.2"/></svg>
<div class="t" style="left:32.19999999999999px;top:182.0px;font-size:13px;line-height:13px;color:#333;letter-spacing:-0.22px;">00000000068</div>
<div class="t" style="left:187.8px;top:182.0px;font-size:13px;line-height:13px;color:#333;">30.06.2017</div>
<div class="t" style="left:274.5px;top:182.0px;font-size:13px;line-height:13px;color:#333;">Распределение материалов и работ, Списание расходов ...</div>
<div class="t" style="left:651.5px;top:182.0px;font-size:13px;line-height:13px;color:#333;">Торговый дом &quot;Комплек...</div>
<div class="t" style="left:826.5px;top:182.0px;font-size:13px;line-height:13px;color:#333;">Сборочный цех (по правилам)</div>
<div class="t" style="left:1164.5px;top:182.0px;font-size:13px;line-height:13px;color:#333;">Производство кухонной ...</div>
<div class="t" style="left:1444.5px;top:182.0px;font-size:13px;line-height:13px;color:#333;">Федоров Борис Михайлович</div>
<div style="position:absolute;left:0;top:203px;width:1667px;height:28px;background:#f9f9f9"></div>
<div style="position:absolute;left:0;top:231px;width:1667px;height:1px;background:#e3e3e3"></div>
<svg style="position:absolute;left:8px;top:211px" width="17" height="16" viewBox="0 0 17 16"><rect x="0.5" y="0.5" width="15" height="11" rx="1.5" fill="#fff" stroke="#7d90a4" stroke-width="1"/><path d="M2.2,2.5 H13.8 M2.2,4.5 H13.8 M2.2,6.5 H11.6 M2.2,8.5 H4.5" stroke="#9aa5b1" stroke-width="0.9"/><path d="M6.4,8.7 L10.3,12.6 L15.4,6.5" fill="none" stroke="#14b11c" stroke-width="2.2"/></svg>
<div class="t" style="left:32.19999999999999px;top:211.0px;font-size:13px;line-height:13px;color:#333;letter-spacing:-0.22px;">00000000069</div>
<div class="t" style="left:187.8px;top:211.0px;font-size:13px;line-height:13px;color:#333;">30.06.2017</div>
<div class="t" style="left:274.5px;top:211.0px;font-size:13px;line-height:13px;color:#333;">Распределение материалов и работ, Списание расходов ...</div>
<div class="t" style="left:651.5px;top:211.0px;font-size:13px;line-height:13px;color:#333;">Торговый дом &quot;Комплек...</div>
<div class="t" style="left:826.5px;top:211.0px;font-size:13px;line-height:13px;color:#333;">Сборочный цех (по правилам)</div>
<div class="t" style="left:1164.5px;top:211.0px;font-size:13px;line-height:13px;color:#333;">Производство кухонной ...</div>
<div class="t" style="left:1444.5px;top:211.0px;font-size:13px;line-height:13px;color:#333;">Федоров Борис Михайлович</div>
<div style="position:absolute;left:0;top:232px;width:1667px;height:28px;background:#fff"></div>
<div style="position:absolute;left:0;top:260px;width:1667px;height:1px;background:#e3e3e3"></div>
<svg style="position:absolute;left:8px;top:240px" width="17" height="16" viewBox="0 0 17 16"><rect x="0.5" y="0.5" width="15" height="11" rx="1.5" fill="#fff" stroke="#7d90a4" stroke-width="1"/><path d="M2.2,2.5 H13.8 M2.2,4.5 H13.8 M2.2,6.5 H11.6 M2.2,8.5 H4.5" stroke="#9aa5b1" stroke-width="0.9"/><path d="M6.4,8.7 L10.3,12.6 L15.4,6.5" fill="none" stroke="#14b11c" stroke-width="2.2"/></svg>
<div class="t" style="left:32.19999999999999px;top:240.0px;font-size:13px;line-height:13px;color:#333;letter-spacing:-0.22px;">00000000070</div>
<div class="t" style="left:187.8px;top:240.0px;font-size:13px;line-height:13px;color:#333;">30.06.2017</div>
<div class="t" style="left:274.5px;top:240.0px;font-size:13px;line-height:13px;color:#333;">Распределение материалов и работ, Списание расходов ...</div>
<div class="t" style="left:651.5px;top:240.0px;font-size:13px;line-height:13px;color:#333;">Торговый дом &quot;Комплек...</div>
<div class="t" style="left:826.5px;top:240.0px;font-size:13px;line-height:13px;color:#333;">Сборочный цех (по правилам)</div>
<div class="t" style="left:1164.5px;top:240.0px;font-size:13px;line-height:13px;color:#333;">Производство кухонной ...</div>
<div class="t" style="left:1444.5px;top:240.0px;font-size:13px;line-height:13px;color:#333;">Федоров Борис Михайлович</div>
<div style="position:absolute;left:0;top:261px;width:1667px;height:28px;background:#f9f9f9"></div>
<div style="position:absolute;left:0;top:289px;width:1667px;height:1px;background:#e3e3e3"></div>
<svg style="position:absolute;left:8px;top:269px" width="17" height="16" viewBox="0 0 17 16"><rect x="0.5" y="0.5" width="15" height="11" rx="1.5" fill="#fff" stroke="#7d90a4" stroke-width="1"/><path d="M2.2,2.5 H13.8 M2.2,4.5 H13.8 M2.2,6.5 H11.6 M2.2,8.5 H4.5" stroke="#9aa5b1" stroke-width="0.9"/><path d="M6.4,8.7 L10.3,12.6 L15.4,6.5" fill="none" stroke="#14b11c" stroke-width="2.2"/></svg>
<div class="t" style="left:32.19999999999999px;top:269.0px;font-size:13px;line-height:13px;color:#333;letter-spacing:-0.22px;">00000000071</div>
<div class="t" style="left:187.8px;top:269.0px;font-size:13px;line-height:13px;color:#333;">30.06.2017</div>
<div class="t" style="left:274.5px;top:269.0px;font-size:13px;line-height:13px;color:#333;">Распределение материалов и работ, Списание расходов ...</div>
<div class="t" style="left:651.5px;top:269.0px;font-size:13px;line-height:13px;color:#333;">Торговый дом &quot;Комплек...</div>
<div class="t" style="left:826.5px;top:269.0px;font-size:13px;line-height:13px;color:#333;">Сборочный цех (по правилам)</div>
<div class="t" style="left:1164.5px;top:269.0px;font-size:13px;line-height:13px;color:#333;">Производство кухонной ...</div>
<div class="t" style="left:1444.5px;top:269.0px;font-size:13px;line-height:13px;color:#333;">Федоров Борис Михайлович</div>
<div style="position:absolute;left:0;top:290px;width:1667px;height:28px;background:#fff"></div>
<div style="position:absolute;left:0;top:318px;width:1667px;height:1px;background:#e3e3e3"></div>
<svg style="position:absolute;left:8px;top:298px" width="17" height="16" viewBox="0 0 17 16"><rect x="0.5" y="0.5" width="15" height="11" rx="1.5" fill="#fff" stroke="#7d90a4" stroke-width="1"/><path d="M2.2,2.5 H13.8 M2.2,4.5 H13.8 M2.2,6.5 H11.6 M2.2,8.5 H4.5" stroke="#9aa5b1" stroke-width="0.9"/><path d="M6.4,8.7 L10.3,12.6 L15.4,6.5" fill="none" stroke="#14b11c" stroke-width="2.2"/></svg>
<div class="t" style="left:32.19999999999999px;top:298.0px;font-size:13px;line-height:13px;color:#333;letter-spacing:-0.22px;">00000000072</div>
<div class="t" style="left:187.8px;top:298.0px;font-size:13px;line-height:13px;color:#333;">30.06.2017</div>
<div class="t" style="left:274.5px;top:298.0px;font-size:13px;line-height:13px;color:#333;">Распределение материалов и работ, Списание расходов ...</div>
<div class="t" style="left:651.5px;top:298.0px;font-size:13px;line-height:13px;color:#333;">Торговый дом &quot;Комплек...</div>
<div class="t" style="left:826.5px;top:298.0px;font-size:13px;line-height:13px;color:#333;">Сборочный цех (по правилам)</div>
<div class="t" style="left:1164.5px;top:298.0px;font-size:13px;line-height:13px;color:#333;">Производство кухонной ...</div>
<div class="t" style="left:1444.5px;top:298.0px;font-size:13px;line-height:13px;color:#333;">Федоров Борис Михайлович</div>
<div style="position:absolute;left:0;top:319px;width:1667px;height:28px;background:#f9f9f9"></div>
<div style="position:absolute;left:0;top:347px;width:1667px;height:1px;background:#e3e3e3"></div>
<svg style="position:absolute;left:8px;top:327px" width="17" height="16" viewBox="0 0 17 16"><rect x="0.5" y="0.5" width="15" height="11" rx="1.5" fill="#fff" stroke="#7d90a4" stroke-width="1"/><path d="M2.2,2.5 H13.8 M2.2,4.5 H13.8 M2.2,6.5 H11.6 M2.2,8.5 H4.5" stroke="#9aa5b1" stroke-width="0.9"/><path d="M6.4,8.7 L10.3,12.6 L15.4,6.5" fill="none" stroke="#14b11c" stroke-width="2.2"/></svg>
<div class="t" style="left:32.19999999999999px;top:327.0px;font-size:13px;line-height:13px;color:#333;letter-spacing:-0.22px;">00000000073</div>
<div class="t" style="left:187.8px;top:327.0px;font-size:13px;line-height:13px;color:#333;">30.06.2017</div>
<div class="t" style="left:274.5px;top:327.0px;font-size:13px;line-height:13px;color:#333;">Распределение материалов и работ, Списание расходов ...</div>
<div class="t" style="left:651.5px;top:327.0px;font-size:13px;line-height:13px;color:#333;">Торговый дом &quot;Комплек...</div>
<div class="t" style="left:826.5px;top:327.0px;font-size:13px;line-height:13px;color:#333;">Сборочный цех (по правилам)</div>
<div class="t" style="left:1164.5px;top:327.0px;font-size:13px;line-height:13px;color:#333;">Производство кухонной ...</div>
<div class="t" style="left:1444.5px;top:327.0px;font-size:13px;line-height:13px;color:#333;">Федоров Борис Михайлович</div>
<div style="position:absolute;left:0;top:348px;width:1667px;height:28px;background:#fff"></div>
<div style="position:absolute;left:0;top:376px;width:1667px;height:1px;background:#e3e3e3"></div>
<svg style="position:absolute;left:8px;top:356px" width="17" height="16" viewBox="0 0 17 16"><rect x="0.5" y="0.5" width="15" height="11" rx="1.5" fill="#fff" stroke="#7d90a4" stroke-width="1"/><path d="M2.2,2.5 H13.8 M2.2,4.5 H13.8 M2.2,6.5 H11.6 M2.2,8.5 H4.5" stroke="#9aa5b1" stroke-width="0.9"/><path d="M6.4,8.7 L10.3,12.6 L15.4,6.5" fill="none" stroke="#14b11c" stroke-width="2.2"/></svg>
<div class="t" style="left:32.19999999999999px;top:356.0px;font-size:13px;line-height:13px;color:#333;letter-spacing:-0.22px;">00000000074</div>
<div class="t" style="left:187.8px;top:356.0px;font-size:13px;line-height:13px;color:#333;">30.06.2017</div>
<div class="t" style="left:274.5px;top:356.0px;font-size:13px;line-height:13px;color:#333;">Распределение материалов и работ, Списание расходов ...</div>
<div class="t" style="left:651.5px;top:356.0px;font-size:13px;line-height:13px;color:#333;">Торговый дом &quot;Комплек...</div>
<div class="t" style="left:826.5px;top:356.0px;font-size:13px;line-height:13px;color:#333;">Сборочный цех (по правилам)</div>
<div class="t" style="left:1164.5px;top:356.0px;font-size:13px;line-height:13px;color:#333;">Производство кухонной ...</div>
<div class="t" style="left:1444.5px;top:356.0px;font-size:13px;line-height:13px;color:#333;">Федоров Борис Михайлович</div>
<div style="position:absolute;left:0;top:377px;width:1667px;height:28px;background:#f9f9f9"></div>
<div style="position:absolute;left:0;top:405px;width:1667px;height:1px;background:#e3e3e3"></div>
<svg style="position:absolute;left:8px;top:385px" width="17" height="16" viewBox="0 0 17 16"><rect x="0.5" y="0.5" width="15" height="11" rx="1.5" fill="#fff" stroke="#7d90a4" stroke-width="1"/><path d="M2.2,2.5 H13.8 M2.2,4.5 H13.8 M2.2,6.5 H11.6 M2.2,8.5 H4.5" stroke="#9aa5b1" stroke-width="0.9"/><path d="M6.4,8.7 L10.3,12.6 L15.4,6.5" fill="none" stroke="#14b11c" stroke-width="2.2"/></svg>
<div class="t" style="left:32.19999999999999px;top:385.0px;font-size:13px;line-height:13px;color:#333;letter-spacing:-0.22px;">00000000075</div>
<div class="t" style="left:187.8px;top:385.0px;font-size:13px;line-height:13px;color:#333;">30.06.2017</div>
<div class="t" style="left:274.5px;top:385.0px;font-size:13px;line-height:13px;color:#333;">Распределение материалов и работ, Списание расходов ...</div>
<div class="t" style="left:651.5px;top:385.0px;font-size:13px;line-height:13px;color:#333;">Торговый дом &quot;Комплек...</div>
<div class="t" style="left:826.5px;top:385.0px;font-size:13px;line-height:13px;color:#333;">Сборочный цех (по правилам)</div>
<div class="t" style="left:1164.5px;top:385.0px;font-size:13px;line-height:13px;color:#333;">Производство кухонной ...</div>
<div class="t" style="left:1444.5px;top:385.0px;font-size:13px;line-height:13px;color:#333;">Федоров Борис Михайлович</div>
<div style="position:absolute;left:0;top:406px;width:1667px;height:28px;background:#fff"></div>
<div style="position:absolute;left:0;top:434px;width:1667px;height:1px;background:#e3e3e3"></div>
<svg style="position:absolute;left:8px;top:414px" width="17" height="16" viewBox="0 0 17 16"><rect x="0.5" y="0.5" width="15" height="11" rx="1.5" fill="#fff" stroke="#7d90a4" stroke-width="1"/><path d="M2.2,2.5 H13.8 M2.2,4.5 H13.8 M2.2,6.5 H11.6 M2.2,8.5 H4.5" stroke="#9aa5b1" stroke-width="0.9"/><path d="M6.4,8.7 L10.3,12.6 L15.4,6.5" fill="none" stroke="#14b11c" stroke-width="2.2"/></svg>
<div class="t" style="left:32.19999999999999px;top:414.0px;font-size:13px;line-height:13px;color:#333;letter-spacing:-0.22px;">00000000090</div>
<div class="t" style="left:187.8px;top:414.0px;font-size:13px;line-height:13px;color:#333;">31.07.2017</div>
<div class="t" style="left:274.5px;top:414.0px;font-size:13px;line-height:13px;color:#333;">Распределение материалов и работ, Списание расходов ...</div>
<div class="t" style="left:651.5px;top:414.0px;font-size:13px;line-height:13px;color:#333;">Торговый дом &quot;Комплек...</div>
<div class="t" style="left:826.5px;top:414.0px;font-size:13px;line-height:13px;color:#333;">Цех по изготовлению издел...</div>
<div class="t" style="left:1444.5px;top:414.0px;font-size:13px;line-height:13px;color:#333;">Федоров Борис Михайлович</div>
<div style="position:absolute;left:0;top:435px;width:1667px;height:28px;background:#f9f9f9"></div>
<div style="position:absolute;left:0;top:463px;width:1667px;height:1px;background:#e3e3e3"></div>
<svg style="position:absolute;left:8px;top:443px" width="17" height="16" viewBox="0 0 17 16"><rect x="0.5" y="0.5" width="15" height="11" rx="1.5" fill="#fff" stroke="#7d90a4" stroke-width="1"/><path d="M2.2,2.5 H13.8 M2.2,4.5 H13.8 M2.2,6.5 H11.6 M2.2,8.5 H4.5" stroke="#9aa5b1" stroke-width="0.9"/><path d="M6.4,8.7 L10.3,12.6 L15.4,6.5" fill="none" stroke="#14b11c" stroke-width="2.2"/></svg>
<div class="t" style="left:32.19999999999999px;top:443.0px;font-size:13px;line-height:13px;color:#333;letter-spacing:-0.22px;">00000000091</div>
<div class="t" style="left:187.8px;top:443.0px;font-size:13px;line-height:13px;color:#333;">31.07.2017</div>
<div class="t" style="left:274.5px;top:443.0px;font-size:13px;line-height:13px;color:#333;">Распределение материалов и работ, Списание расходов ...</div>
<div class="t" style="left:651.5px;top:443.0px;font-size:13px;line-height:13px;color:#333;">Торговый дом &quot;Комплек...</div>
<div class="t" style="left:826.5px;top:443.0px;font-size:13px;line-height:13px;color:#333;">Цех по изготовлению издел...</div>
<div class="t" style="left:1444.5px;top:443.0px;font-size:13px;line-height:13px;color:#333;">Федоров Борис Михайлович</div>
<div style="position:absolute;left:0;top:464px;width:1667px;height:28px;background:#fff"></div>
<div style="position:absolute;left:0;top:492px;width:1667px;height:1px;background:#e3e3e3"></div>
<svg style="position:absolute;left:8px;top:472px" width="17" height="16" viewBox="0 0 17 16"><rect x="0.5" y="0.5" width="15" height="11" rx="1.5" fill="#fff" stroke="#7d90a4" stroke-width="1"/><path d="M2.2,2.5 H13.8 M2.2,4.5 H13.8 M2.2,6.5 H11.6 M2.2,8.5 H4.5" stroke="#9aa5b1" stroke-width="0.9"/><path d="M6.4,8.7 L10.3,12.6 L15.4,6.5" fill="none" stroke="#14b11c" stroke-width="2.2"/></svg>
<div class="t" style="left:32.19999999999999px;top:472.0px;font-size:13px;line-height:13px;color:#333;letter-spacing:-0.22px;">00000000056</div>
<div class="t" style="left:187.8px;top:472.0px;font-size:13px;line-height:13px;color:#333;">31.07.2017</div>
<div class="t" style="left:274.5px;top:472.0px;font-size:13px;line-height:13px;color:#333;">Распределение материалов и работ, Списание расходов ...</div>
<div class="t" style="left:651.5px;top:472.0px;font-size:13px;line-height:13px;color:#333;">Торговый дом &quot;Комплек...</div>
<div class="t" style="left:826.5px;top:472.0px;font-size:13px;line-height:13px;color:#333;">Цех по изготовлению торто...</div>
<div class="t" style="left:1164.5px;top:472.0px;font-size:13px;line-height:13px;color:#333;">Производство выпечки</div>
<div class="t" style="left:1444.5px;top:472.0px;font-size:13px;line-height:13px;color:#333;">Федоров Борис Михайлович</div>
<div style="position:absolute;left:0;top:493px;width:1667px;height:28px;background:#f9f9f9"></div>
<div style="position:absolute;left:0;top:521px;width:1667px;height:1px;background:#e3e3e3"></div>
<svg style="position:absolute;left:8px;top:501px" width="17" height="16" viewBox="0 0 17 16"><rect x="0.5" y="0.5" width="15" height="11" rx="1.5" fill="#fff" stroke="#7d90a4" stroke-width="1"/><path d="M2.2,2.5 H13.8 M2.2,4.5 H13.8 M2.2,6.5 H11.6 M2.2,8.5 H4.5" stroke="#9aa5b1" stroke-width="0.9"/><path d="M6.4,8.7 L10.3,12.6 L15.4,6.5" fill="none" stroke="#14b11c" stroke-width="2.2"/></svg>
<div class="t" style="left:32.19999999999999px;top:501.0px;font-size:13px;line-height:13px;color:#333;letter-spacing:-0.22px;">00000000057</div>
<div class="t" style="left:187.8px;top:501.0px;font-size:13px;line-height:13px;color:#333;">31.07.2017</div>
<div class="t" style="left:274.5px;top:501.0px;font-size:13px;line-height:13px;color:#333;">Распределение материалов и работ, Списание расходов ...</div>
<div class="t" style="left:651.5px;top:501.0px;font-size:13px;line-height:13px;color:#333;">Торговый дом &quot;Комплек...</div>
<div class="t" style="left:826.5px;top:501.0px;font-size:13px;line-height:13px;color:#333;">Цех по изготовлению торто...</div>
<div class="t" style="left:1164.5px;top:501.0px;font-size:13px;line-height:13px;color:#333;">Производство выпечки</div>
<div class="t" style="left:1444.5px;top:501.0px;font-size:13px;line-height:13px;color:#333;">Федоров Борис Михайлович</div>
<div style="position:absolute;left:0;top:522px;width:1667px;height:28px;background:#fff"></div>
<div style="position:absolute;left:0;top:550px;width:1667px;height:1px;background:#e3e3e3"></div>
<svg style="position:absolute;left:8px;top:530px" width="17" height="16" viewBox="0 0 17 16"><rect x="0.5" y="0.5" width="15" height="11" rx="1.5" fill="#fff" stroke="#7d90a4" stroke-width="1"/><path d="M2.2,2.5 H13.8 M2.2,4.5 H13.8 M2.2,6.5 H11.6 M2.2,8.5 H4.5" stroke="#9aa5b1" stroke-width="0.9"/><path d="M6.4,8.7 L10.3,12.6 L15.4,6.5" fill="none" stroke="#14b11c" stroke-width="2.2"/></svg>
<div class="t" style="left:32.19999999999999px;top:530.0px;font-size:13px;line-height:13px;color:#333;letter-spacing:-0.22px;">00000000058</div>
<div class="t" style="left:187.8px;top:530.0px;font-size:13px;line-height:13px;color:#333;">31.07.2017</div>
<div class="t" style="left:274.5px;top:530.0px;font-size:13px;line-height:13px;color:#333;">Распределение материалов и работ, Списание расходов ...</div>
<div class="t" style="left:651.5px;top:530.0px;font-size:13px;line-height:13px;color:#333;">Торговый дом &quot;Комплек...</div>
<div class="t" style="left:826.5px;top:530.0px;font-size:13px;line-height:13px;color:#333;">Цех по изготовлению торто...</div>
<div class="t" style="left:1164.5px;top:530.0px;font-size:13px;line-height:13px;color:#333;">Производство выпечки</div>
<div class="t" style="left:1444.5px;top:530.0px;font-size:13px;line-height:13px;color:#333;">Федоров Борис Михайлович</div>
<div style="position:absolute;left:0;top:551px;width:1667px;height:28px;background:#f9f9f9"></div>
<div style="position:absolute;left:0;top:579px;width:1667px;height:1px;background:#e3e3e3"></div>
<svg style="position:absolute;left:8px;top:559px" width="17" height="16" viewBox="0 0 17 16"><rect x="0.5" y="0.5" width="15" height="11" rx="1.5" fill="#fff" stroke="#7d90a4" stroke-width="1"/><path d="M2.2,2.5 H13.8 M2.2,4.5 H13.8 M2.2,6.5 H11.6 M2.2,8.5 H4.5" stroke="#9aa5b1" stroke-width="0.9"/><path d="M6.4,8.7 L10.3,12.6 L15.4,6.5" fill="none" stroke="#14b11c" stroke-width="2.2"/></svg>
<div class="t" style="left:32.19999999999999px;top:559.0px;font-size:13px;line-height:13px;color:#333;letter-spacing:-0.22px;">00000000059</div>
<div class="t" style="left:187.8px;top:559.0px;font-size:13px;line-height:13px;color:#333;">31.07.2017</div>
<div class="t" style="left:274.5px;top:559.0px;font-size:13px;line-height:13px;color:#333;">Распределение материалов и работ, Списание расходов ...</div>
<div class="t" style="left:651.5px;top:559.0px;font-size:13px;line-height:13px;color:#333;">Торговый дом &quot;Комплек...</div>
<div class="t" style="left:826.5px;top:559.0px;font-size:13px;line-height:13px;color:#333;">Цех по изготовлению торто...</div>
<div class="t" style="left:1164.5px;top:559.0px;font-size:13px;line-height:13px;color:#333;">Производство выпечки</div>
<div class="t" style="left:1444.5px;top:559.0px;font-size:13px;line-height:13px;color:#333;">Федоров Борис Михайлович</div>
<div style="position:absolute;left:0;top:580px;width:1667px;height:28px;background:#fff"></div>
<div style="position:absolute;left:0;top:608px;width:1667px;height:1px;background:#e3e3e3"></div>
<svg style="position:absolute;left:8px;top:588px" width="17" height="16" viewBox="0 0 17 16"><rect x="0.5" y="0.5" width="15" height="11" rx="1.5" fill="#fff" stroke="#7d90a4" stroke-width="1"/><path d="M2.2,2.5 H13.8 M2.2,4.5 H13.8 M2.2,6.5 H11.6 M2.2,8.5 H4.5" stroke="#9aa5b1" stroke-width="0.9"/><path d="M6.4,8.7 L10.3,12.6 L15.4,6.5" fill="none" stroke="#14b11c" stroke-width="2.2"/></svg>
<div class="t" style="left:32.19999999999999px;top:588.0px;font-size:13px;line-height:13px;color:#333;letter-spacing:-0.22px;">00000000060</div>
<div class="t" style="left:187.8px;top:588.0px;font-size:13px;line-height:13px;color:#333;">31.07.2017</div>
<div class="t" style="left:274.5px;top:588.0px;font-size:13px;line-height:13px;color:#333;">Распределение материалов и работ, Списание расходов ...</div>
<div class="t" style="left:651.5px;top:588.0px;font-size:13px;line-height:13px;color:#333;">Торговый дом &quot;Комплек...</div>
<div class="t" style="left:826.5px;top:588.0px;font-size:13px;line-height:13px;color:#333;">Цех по изготовлению торто...</div>
<div class="t" style="left:1164.5px;top:588.0px;font-size:13px;line-height:13px;color:#333;">Производство выпечки</div>
<div class="t" style="left:1444.5px;top:588.0px;font-size:13px;line-height:13px;color:#333;">Федоров Борис Михайлович</div>
<div style="position:absolute;left:0;top:609px;width:1667px;height:28px;background:#f9f9f9"></div>
<div style="position:absolute;left:0;top:637px;width:1667px;height:1px;background:#e3e3e3"></div>
<svg style="position:absolute;left:8px;top:617px" width="17" height="16" viewBox="0 0 17 16"><rect x="0.5" y="0.5" width="15" height="11" rx="1.5" fill="#fff" stroke="#7d90a4" stroke-width="1"/><path d="M2.2,2.5 H13.8 M2.2,4.5 H13.8 M2.2,6.5 H11.6 M2.2,8.5 H4.5" stroke="#9aa5b1" stroke-width="0.9"/><path d="M6.4,8.7 L10.3,12.6 L15.4,6.5" fill="none" stroke="#14b11c" stroke-width="2.2"/></svg>
<div class="t" style="left:32.19999999999999px;top:617.0px;font-size:13px;line-height:13px;color:#333;letter-spacing:-0.22px;">00000000061</div>
<div class="t" style="left:187.8px;top:617.0px;font-size:13px;line-height:13px;color:#333;">31.07.2017</div>
<div class="t" style="left:274.5px;top:617.0px;font-size:13px;line-height:13px;color:#333;">Распределение материалов и работ, Списание расходов ...</div>
<div class="t" style="left:651.5px;top:617.0px;font-size:13px;line-height:13px;color:#333;">Торговый дом &quot;Комплек...</div>
<div class="t" style="left:826.5px;top:617.0px;font-size:13px;line-height:13px;color:#333;">Цех по изготовлению торто...</div>
<div class="t" style="left:1164.5px;top:617.0px;font-size:13px;line-height:13px;color:#333;">Производство выпечки</div>
<div class="t" style="left:1444.5px;top:617.0px;font-size:13px;line-height:13px;color:#333;">Федоров Борис Михайлович</div>
<div style="position:absolute;left:0;top:638px;width:1667px;height:28px;background:#fff"></div>
<div style="position:absolute;left:0;top:666px;width:1667px;height:1px;background:#e3e3e3"></div>
<svg style="position:absolute;left:8px;top:646px" width="17" height="16" viewBox="0 0 17 16"><rect x="0.5" y="0.5" width="15" height="11" rx="1.5" fill="#fff" stroke="#7d90a4" stroke-width="1"/><path d="M2.2,2.5 H13.8 M2.2,4.5 H13.8 M2.2,6.5 H11.6 M2.2,8.5 H4.5" stroke="#9aa5b1" stroke-width="0.9"/><path d="M6.4,8.7 L10.3,12.6 L15.4,6.5" fill="none" stroke="#14b11c" stroke-width="2.2"/></svg>
<div class="t" style="left:32.19999999999999px;top:646.0px;font-size:13px;line-height:13px;color:#333;letter-spacing:-0.22px;">00000000062</div>
<div class="t" style="left:187.8px;top:646.0px;font-size:13px;line-height:13px;color:#333;">31.07.2017</div>
<div class="t" style="left:274.5px;top:646.0px;font-size:13px;line-height:13px;color:#333;">Распределение материалов и работ, Списание расходов ...</div>
<div class="t" style="left:651.5px;top:646.0px;font-size:13px;line-height:13px;color:#333;">Торговый дом &quot;Комплек...</div>
<div class="t" style="left:826.5px;top:646.0px;font-size:13px;line-height:13px;color:#333;">Цех по изготовлению торто...</div>
<div class="t" style="left:1164.5px;top:646.0px;font-size:13px;line-height:13px;color:#333;">Производство выпечки</div>
<div class="t" style="left:1444.5px;top:646.0px;font-size:13px;line-height:13px;color:#333;">Федоров Борис Михайлович</div>
<div style="position:absolute;left:0;top:667px;width:1667px;height:28px;background:#f9f9f9"></div>
<div style="position:absolute;left:0;top:695px;width:1667px;height:1px;background:#e3e3e3"></div>
<svg style="position:absolute;left:8px;top:675px" width="17" height="16" viewBox="0 0 17 16"><rect x="0.5" y="0.5" width="15" height="11" rx="1.5" fill="#fff" stroke="#7d90a4" stroke-width="1"/><path d="M2.2,2.5 H13.8 M2.2,4.5 H13.8 M2.2,6.5 H11.6 M2.2,8.5 H4.5" stroke="#9aa5b1" stroke-width="0.9"/><path d="M6.4,8.7 L10.3,12.6 L15.4,6.5" fill="none" stroke="#14b11c" stroke-width="2.2"/></svg>
<div class="t" style="left:32.19999999999999px;top:675.0px;font-size:13px;line-height:13px;color:#333;letter-spacing:-0.22px;">00000000063</div>
<div class="t" style="left:187.8px;top:675.0px;font-size:13px;line-height:13px;color:#333;">31.07.2017</div>
<div class="t" style="left:274.5px;top:675.0px;font-size:13px;line-height:13px;color:#333;">Распределение материалов и работ, Списание расходов ...</div>
<div class="t" style="left:651.5px;top:675.0px;font-size:13px;line-height:13px;color:#333;">Торговый дом &quot;Комплек...</div>
<div class="t" style="left:826.5px;top:675.0px;font-size:13px;line-height:13px;color:#333;">Цех по изготовлению торто...</div>
<div class="t" style="left:1164.5px;top:675.0px;font-size:13px;line-height:13px;color:#333;">Производство выпечки</div>
<div class="t" style="left:1444.5px;top:675.0px;font-size:13px;line-height:13px;color:#333;">Федоров Борис Михайлович</div>
<div style="position:absolute;left:0;top:696px;width:1667px;height:28px;background:#fff"></div>
<div style="position:absolute;left:0;top:724px;width:1667px;height:1px;background:#e3e3e3"></div>
<svg style="position:absolute;left:8px;top:704px" width="17" height="16" viewBox="0 0 17 16"><rect x="0.5" y="0.5" width="15" height="11" rx="1.5" fill="#fff" stroke="#7d90a4" stroke-width="1"/><path d="M2.2,2.5 H13.8 M2.2,4.5 H13.8 M2.2,6.5 H11.6 M2.2,8.5 H4.5" stroke="#9aa5b1" stroke-width="0.9"/><path d="M6.4,8.7 L10.3,12.6 L15.4,6.5" fill="none" stroke="#14b11c" stroke-width="2.2"/></svg>
<div class="t" style="left:32.19999999999999px;top:704.0px;font-size:13px;line-height:13px;color:#333;letter-spacing:-0.22px;">00000000001</div>
<div class="t" style="left:187.8px;top:704.0px;font-size:13px;line-height:13px;color:#333;">06.04.2018</div>
<div class="t" style="left:274.5px;top:704.0px;font-size:13px;line-height:13px;color:#333;">Выработка сотрудников, Регистрация сдельных работ</div>
<div class="t" style="left:651.5px;top:704.0px;font-size:13px;line-height:13px;color:#333;">Торговый дом &quot;Комплек...</div>
<div class="t" style="left:826.5px;top:704.0px;font-size:13px;line-height:13px;color:#333;">Цех по изготовлению торто...</div>
<div class="t" style="left:1444.5px;top:704.0px;font-size:13px;line-height:13px;color:#333;">Федоров Борис Михайлович</div>
<div style="position:absolute;left:0;top:725px;width:1667px;height:28px;background:#f9f9f9"></div>
<div style="position:absolute;left:0;top:753px;width:1667px;height:1px;background:#e3e3e3"></div>
<svg style="position:absolute;left:8px;top:733px" width="17" height="16" viewBox="0 0 17 16"><rect x="0.5" y="0.5" width="15" height="11" rx="1.5" fill="#fff" stroke="#7d90a4" stroke-width="1"/><path d="M2.2,2.5 H13.8 M2.2,4.5 H13.8 M2.2,6.5 H11.6 M2.2,8.5 H4.5" stroke="#9aa5b1" stroke-width="0.9"/><path d="M6.4,8.7 L10.3,12.6 L15.4,6.5" fill="none" stroke="#14b11c" stroke-width="2.2"/></svg>
<div class="t" style="left:32.19999999999999px;top:733.0px;font-size:13px;line-height:13px;color:#333;letter-spacing:-0.22px;">00000000003</div>
<div class="t" style="left:187.8px;top:733.0px;font-size:13px;line-height:13px;color:#333;">09.04.2018</div>
<div class="t" style="left:274.5px;top:733.0px;font-size:13px;line-height:13px;color:#333;">Выработка сотрудников, Регистрация сдельных работ</div>
<div class="t" style="left:651.5px;top:733.0px;font-size:13px;line-height:13px;color:#333;">Торговый дом &quot;Комплек...</div>
<div class="t" style="left:826.5px;top:733.0px;font-size:13px;line-height:13px;color:#333;">Цех по изготовлению торто...</div>
<div class="t" style="left:1444.5px;top:733.0px;font-size:13px;line-height:13px;color:#333;">Федоров Борис Михайлович</div>
</div>
<div style="position:absolute;left:1804px;top:980px;width:97px;height:21px;box-sizing:border-box;border:1px solid #a3a3a3;border-top:none;background:#fff"></div>
<div style="position:absolute;left:1853px;top:980px;width:23px;height:20px;background:linear-gradient(#fff 40%,#ededed)"></div>
<div style="position:absolute;left:1877px;top:980px;width:23px;height:20px;background:linear-gradient(#fff 40%,#ededed)"></div>
<div style="position:absolute;left:1828px;top:980px;width:1px;height:20px;background:#a3a3a3"></div>
<div style="position:absolute;left:1852px;top:980px;width:1px;height:20px;background:#a3a3a3"></div>
<div style="position:absolute;left:1876px;top:980px;width:1px;height:20px;background:#a3a3a3"></div>
<svg style="position:absolute;left:1811px;top:986px" width="11" height="9" viewBox="0 0 11 9"><rect x="1" y="1" width="9" height="1.1" fill="#aaa"/><path d="M1,7 L5.5,2.6 L10,7 Z" fill="#aaa"/></svg>
<svg style="position:absolute;left:1835px;top:986px" width="11" height="9" viewBox="0 0 11 9"><path d="M1,7 L5.5,2.6 L10,7 Z" fill="#aaa"/></svg>
<svg style="position:absolute;left:1859px;top:986px" width="11" height="9" viewBox="0 0 11 9"><path d="M1,2.2 H10 L5.5,6.9 Z" fill="#333"/></svg>
<svg style="position:absolute;left:1883px;top:986px" width="11" height="9" viewBox="0 0 11 9"><path d="M1,2.2 H10 L5.5,6.9 Z" fill="#333"/><rect x="1" y="7.2" width="9" height="1.1" fill="#333"/></svg>
<div class="t " style="left:233px;top:1012.7px;font-size:13px;line-height:13px;color:#333;">См. также:</div>
<div class="t " style="left:300.5px;top:1012.7px;font-size:13px;line-height:13px;color:#1d4fb8;text-decoration:underline;letter-spacing:-0.15px;">Заказы материалов</div>
</body></html>
